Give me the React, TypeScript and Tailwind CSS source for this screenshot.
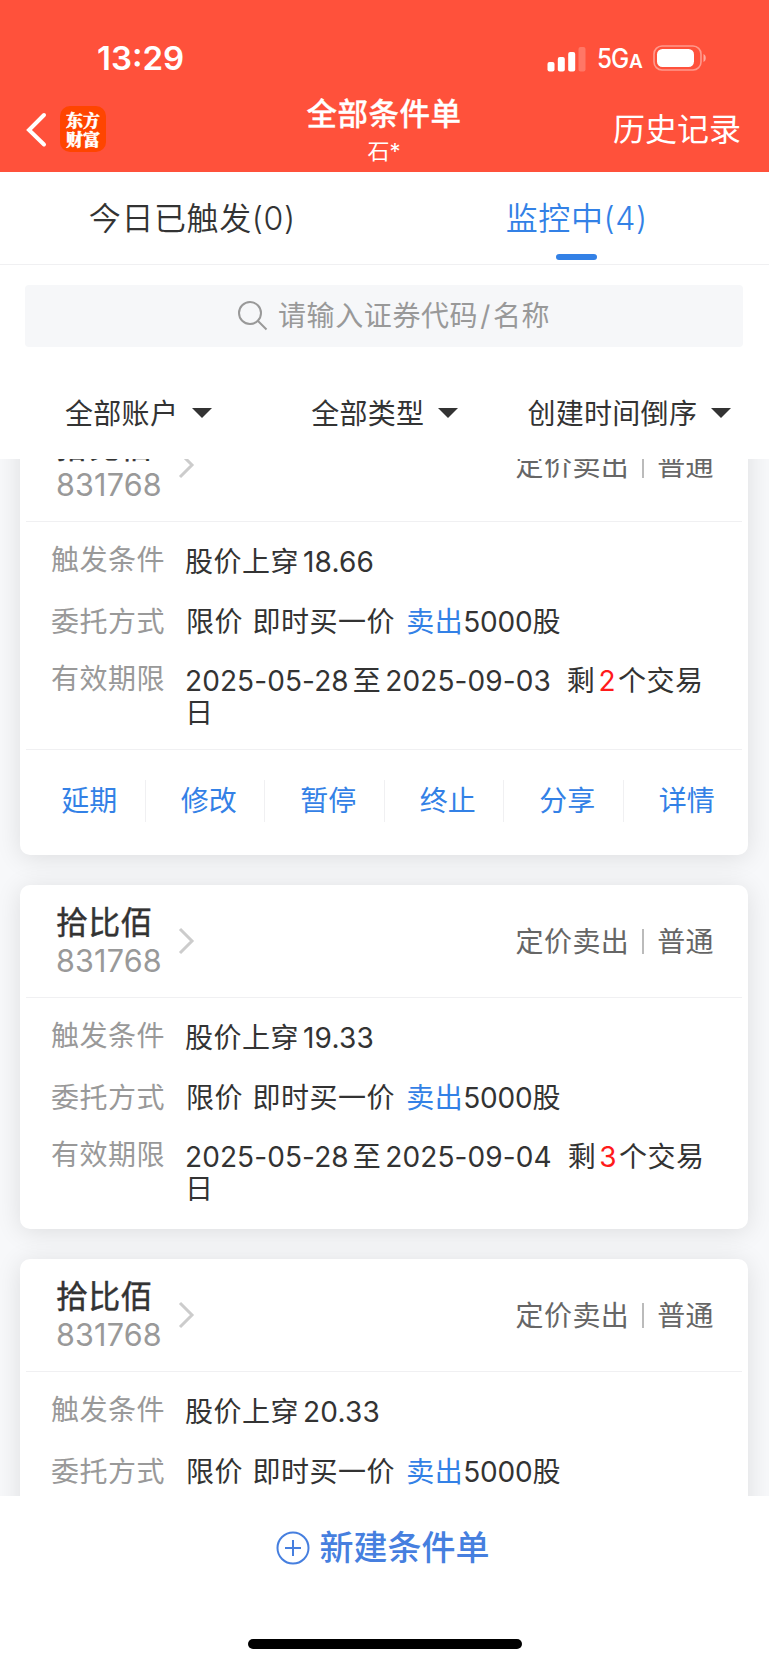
import React from 'react';

type Order = {
  id: number;
  name: string;
  code: string;
  price: string;
  from: string;
  to: string;
  daysLeft: number;
  active?: boolean;
};

const orders: Order[] = [
  { id: 1, name: '拾比佰', code: '831768', price: '18.66', from: '2025-05-28', to: '2025-09-03', daysLeft: 2, active: true },
  { id: 2, name: '拾比佰', code: '831768', price: '19.33', from: '2025-05-28', to: '2025-09-04', daysLeft: 3 },
  { id: 3, name: '拾比佰', code: '831768', price: '20.33', from: '2025-05-28', to: '2025-09-05', daysLeft: 4 },
];

const actions = ['延期', '修改', '暂停', '终止', '分享', '详情'];

function StatusBar() {
  return (
    <div className="flex h-[92px] items-start justify-between pt-[37px] pl-[97px] pr-[62px]">
      <span className="text-[33px] leading-[42px] font-semibold">13:29</span>
      <div className="flex items-center pt-[7px]">
        <svg width="39" height="25" viewBox="0 0 39 25" fill="currentColor">
          <rect x="0.5" y="15" width="7" height="9.5" rx="2" />
          <rect x="10.8" y="10" width="7" height="14.5" rx="2" />
          <rect x="21.2" y="5" width="7" height="19.5" rx="2" />
          <rect x="31.5" y="0" width="7" height="24.5" rx="2" opacity="0.22" />
        </svg>
        <span className="ml-[11px] flex w-[45px] items-baseline pt-[2px] text-[27px] leading-[25px] font-medium">
          <span className="origin-left scale-x-90 tracking-[-1px]">5G</span>
          <span className="-ml-[3px] text-[19px] font-semibold">A</span>
        </span>
        <svg className="ml-[11px] -mt-[3px]" width="54" height="26" viewBox="0 0 54 26" fill="none">
          <rect x="1" y="1" width="47" height="24" rx="8" stroke="white" strokeOpacity="0.42" strokeWidth="1.6" />
          <rect x="4" y="4" width="37" height="18" rx="5.5" fill="white" />
          <path d="M50.5 9c3 1.200 3 6.800 0 8z" fill="white" fillOpacity="0.5" />
        </svg>
      </div>
    </div>
  );
}

function NavBar() {
  return (
    <div className="grid h-20 grid-cols-3">
      <div className="flex items-start pt-[14px] pl-[26px]">
        <svg className="mt-[6px]" width="22" height="36" viewBox="0 0 22 36" fill="none" stroke="white" strokeWidth="4" strokeLinecap="round">
          <path d="M18 3 3 18l15 14.500" strokeLinejoin="miter" />
        </svg>
        <div className="ml-[12px] flex h-[46px] w-[46px] flex-col items-center justify-center rounded-[10px] bg-[#ff4500] font-['Noto_Serif_CJK_SC','Noto_Sans_CJK_SC',serif] text-[17px] leading-[19px] font-black [-webkit-text-stroke:0.4px_white]">
          <span>东方</span>
          <span>财富</span>
        </div>
      </div>
      <div className="flex flex-col items-center pt-[2px]">
        <h1 className="-ml-[1px] text-[30.5px] leading-[40px] font-medium tracking-[0.5px] [-webkit-text-stroke:0.3px_white]">全部条件单</h1>
        <span className="-ml-[1px] pt-[1px] text-[22px] leading-[32px]">石*</span>
      </div>
      <div className="pt-[18px] pr-[28px] text-right text-[32px] leading-[40px]">历史记录</div>
    </div>
  );
}

function Tabs() {
  return (
    <div className="grid h-[93px] grid-cols-2 border-b border-[#f0f0f2] text-[32px] font-[350] tracking-[0.6px]">
      <div className="pt-[27px] text-center leading-[40px] text-[#333]">今日已触发(0)</div>
      <div className="flex flex-col items-center pt-[27px] text-[#3381e6]">
        <span className="leading-[40px]">监控中(4)</span>
        <span className="mt-[15px] h-[6px] w-[41px] rounded-full bg-[#3381e6]" />
      </div>
    </div>
  );
}

function SearchBox() {
  return (
    <div className="mr-[26px] ml-[25px] mt-5 flex h-[62px] items-center rounded-[4px] bg-[#f6f7f9] pl-[212px] text-[28px] text-[#999]">
      <svg width="32" height="32" viewBox="0 0 32 32" fill="none" stroke="currentColor" strokeWidth="2">
        <circle cx="13" cy="13" r="11" />
        <path d="M20.500 20.500l9 9" />
      </svg>
      <span className="ml-[9px] tracking-[0.6px]">
        请输入证券代码<span className="mx-[2px]">/</span>名称
      </span>
    </div>
  );
}

function Filter({ label, className }: { label: string; className: string }) {
  return (
    <div className={`flex items-center ${className}`}>
      <span className="pt-[1px]">{label}</span>
      <svg className="ml-[14px]" width="20" height="10" viewBox="0 0 20 10" fill="#333">
        <path d="M0 0h20l-10 10z" />
      </svg>
    </div>
  );
}

function Row({ label, children, className }: { label: string; children: React.ReactNode; className: string }) {
  return (
    <div className={`flex items-start ${className}`}>
      <span className="w-[134px] shrink-0 text-[#999]">{label}</span>
      <div className="text-[#333]">{children}</div>
    </div>
  );
}

function OrderCard({ order }: { order: Order }) {
  return (
    <div className="mr-[21px] ml-[20px] rounded-[10px] bg-white px-[6px] shadow-[0_3px_26px_rgba(0,0,0,0.11)]">
      <div className="flex h-[113px] border-b border-[#f0f0f2] pl-[30px] pr-[28px]">
        <div className="pt-[18px]">
          <div className="text-[32px] leading-[39px] tracking-[0.2px] text-[#333] [-webkit-text-stroke:0.4px_#333]">{order.name}</div>
          <div className="text-[30.5px] leading-[38px] tracking-[0.2px] text-[#999]">{order.code}</div>
        </div>
        <svg className="mt-[42px] ml-[16px]" width="18" height="28" viewBox="0 0 18 28" fill="none" stroke="#ccc" strokeWidth="3">
          <path d="M2 2l12 12L2 26" />
        </svg>
        <div className="ml-auto flex h-[113px] items-center text-[28px] tracking-[0.4px] text-[#666]">
          <span>定价卖出</span>
          <span className="ml-[13px] mr-[13px] h-[25px] w-[2px] bg-[#bbb]" />
          <span>普通</span>
        </div>
      </div>

      <div className="h-[231px] pl-[25px] text-[28px] leading-[32px] tracking-[0.5px]">
        <Row label="触发条件" className="h-[62px] pt-[22px]">
          <div className="pt-[2px]">股价上穿<span className="ml-1 tracking-[0.2px]">{order.price}</span></div>
        </Row>
        <Row label="委托方式" className="h-[58px] pt-[22px]">
          <div className="pl-[1px]">
            限价 <span className="ml-[1px]">即时买一价</span> <span className="ml-[3px] text-[#3381e6]">卖出</span>
            <span className="tracking-[-0.2px]">5000</span>股
          </div>
        </Row>
        <Row label="有效期限" className="pt-[21px]">
          <div className="pt-[2px] whitespace-nowrap">
            <span className="tracking-[0.1px]">{order.from}</span>
            <span className="mx-1">至</span>
            <span className="tracking-[0.1px]">{order.to}</span>
            <span className="ml-4">剩</span>
            <span className="ml-[3px] mr-[2px] text-[#ff1a1a]">{order.daysLeft}</span>个交易
            <br />日
          </div>
        </Row>
      </div>

      {order.active && (
        <div className="-mt-1 flex h-[106px] border-t border-[#f0f0f2] pt-[30px]">
          {actions.map((action, i) => (
            <div
              key={action}
              className={`flex h-[42px] flex-1 items-center justify-center pl-[8px] text-[28px] text-[#3381e6] ${i < actions.length - 1 ? 'border-r border-[#f0f0f2]' : ''}`}
            >
              {action}
            </div>
          ))}
        </div>
      )}
    </div>
  );
}

export default function App() {
  return (
    <div className="flex h-[1665px] w-full flex-col overflow-hidden bg-white font-['Inter','Noto_Sans_CJK_SC',sans-serif] text-[#333]">
      <header className="h-[172px] shrink-0 bg-[#ff513b] text-white">
        <StatusBar />
        <NavBar />
      </header>

      <div className="h-[287px] shrink-0">
        <Tabs />
        <SearchBox />
        <div className="mt-[46px] flex h-10 text-[28px] tracking-[0.3px]">
          <Filter label="全部账户" className="ml-[65px]" />
          <Filter label="全部类型" className="ml-[99px]" />
          <Filter label="创建时间倒序" className="ml-[69px]" />
        </div>
      </div>

      {/* Order list, scrolled part of the way down */}
      <main className="min-h-0 flex-1 overflow-hidden bg-[#f7f8fa]">
        <div className="-mt-[50px] space-y-[30px]">
          {orders.map((order) => (
            <OrderCard key={order.id} order={order} />
          ))}
        </div>
      </main>

      <footer className="flex h-[169px] shrink-0 flex-col items-center bg-white">
        <div className="mt-[30px] mr-[4px] flex items-center text-[#467fdf]">
          <svg width="34" height="34" viewBox="0 0 34 34" fill="none" stroke="currentColor" strokeWidth="2">
            <circle cx="17" cy="17" r="15.5" />
            <path d="M17 9v16M9 17h16" />
          </svg>
          <span className="ml-[10px] text-[34px] leading-[44px] font-medium">新建条件单</span>
        </div>
        <div className="mt-[69px] h-[10px] w-[274px] rounded-full bg-black" />
      </footer>
    </div>
  );
}
